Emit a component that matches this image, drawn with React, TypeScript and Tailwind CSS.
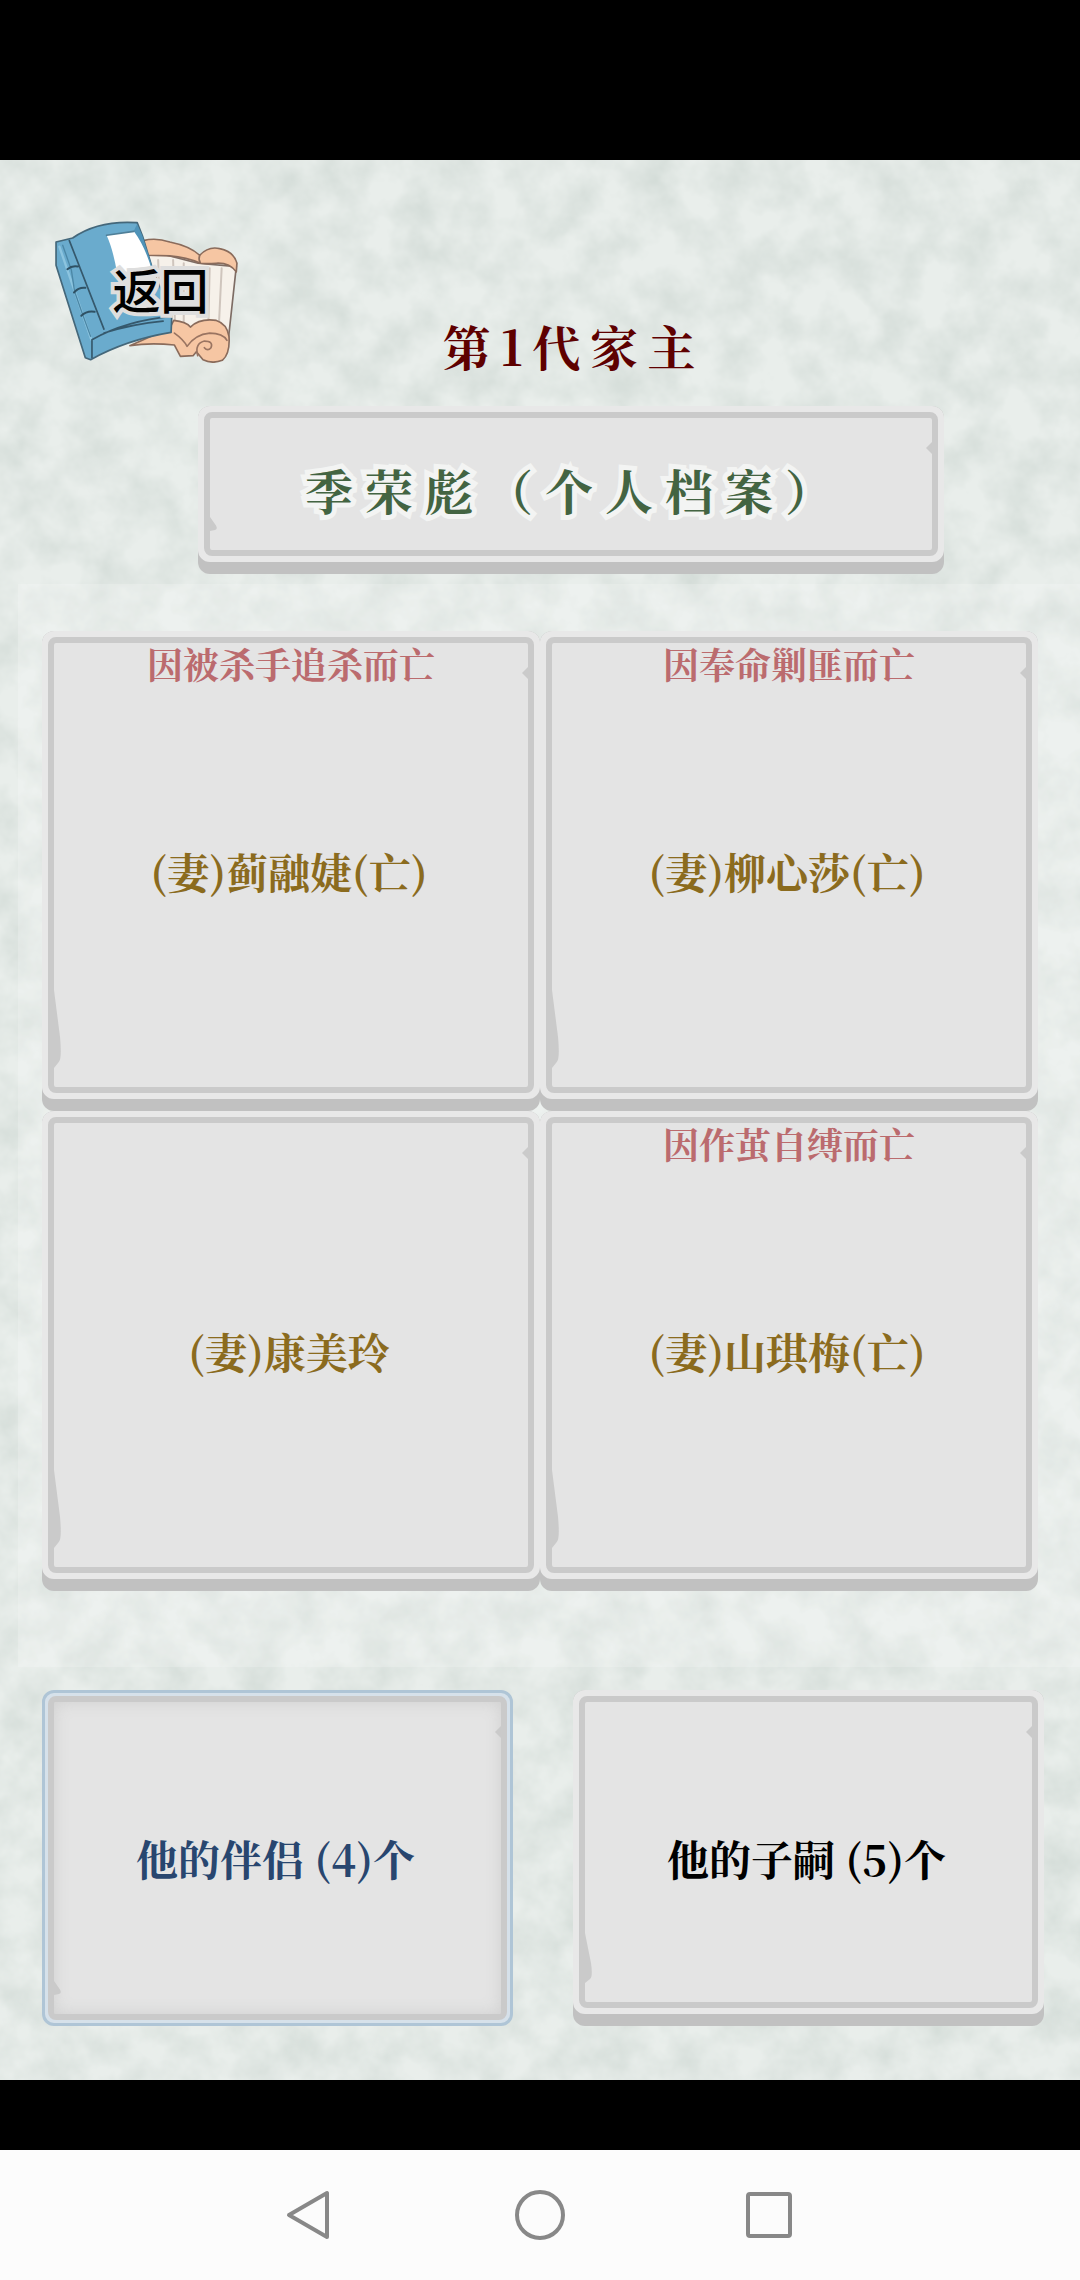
import React, { useState } from 'react';

interface Spouse {
  name: string;
  death?: string;
}

interface PlateProps {
  children: React.ReactNode;
  className?: string;
  wedge?: 'small' | 'medium' | 'large';
  active?: boolean;
  onClick?: () => void;
}

const spouses: Spouse[] = [
  { name: '(妻)蓟融婕(亡)', death: '因被杀手追杀而亡' },
  { name: '(妻)柳心莎(亡)', death: '因奉命剿匪而亡' },
  { name: '(妻)康美玲' },
  { name: '(妻)山琪梅(亡)', death: '因作茧自缚而亡' },
];

const wedgeHeights = {
  small: 'h-[14px]',
  medium: 'h-[50px]',
  large: 'h-[78px]',
};

function Plate({ children, className = '', wedge = 'large', active = false, onClick }: PlateProps) {
  const shell = active
    ? 'border-3 border-[#afc5d6] bg-[#d6e1ea] p-[3px]'
    : 'bg-[#c1c1c1] pb-3';
  const rim = active ? '' : 'border-6 border-[#e8e8e8]';
  const face = active ? 'shadow-[inset_0_0_16px_#cfcfcf]' : '';

  return (
    <button
      type="button"
      onClick={onClick}
      aria-pressed={active}
      className={`flex rounded-xl ${shell} ${className}`}
    >
      <span className={`flex flex-1 self-stretch rounded-xl bg-[#e8e8e8] ${rim}`}>
        <span className={`relative flex flex-1 rounded-lg border-6 border-[#cacaca] bg-[#e4e4e4] ${face}`}>
          <svg
            className="absolute top-6 right-0 h-3 w-[6px]"
            viewBox="0 0 6 12"
            preserveAspectRatio="none"
            aria-hidden="true"
          >
            <path d="M6 0 L0 6 L2 8 L6 12Z" fill="#cacaca" />
          </svg>
          <svg
            className={`absolute bottom-[19px] left-0 w-[7px] ${wedgeHeights[wedge]}`}
            viewBox="0 0 7 50"
            preserveAspectRatio="none"
            aria-hidden="true"
          >
            <path d="M0 0 L6 30 Q8 44 5 46 L0 50Z" fill="#cacaca" />
          </svg>
          {children}
        </span>
      </span>
    </button>
  );
}

function PaperTexture() {
  return (
    <svg className="absolute inset-0 h-full w-full" aria-hidden="true">
      <filter id="paper" x="0" y="0" width="100%" height="100%" colorInterpolationFilters="sRGB">
        <feTurbulence type="fractalNoise" baseFrequency="0.025" numOctaves="4" seed="7" />
        <feColorMatrix
          values="0 0 0 0 0.79
                  0 0 0 0 0.83
                  0 0 0 0 0.81
                  1.1 0 0 0 -0.35"
        />
      </filter>
      <rect width="100%" height="100%" filter="url(#paper)" />
    </svg>
  );
}

function BookIcon() {
  return (
    <svg
      className="absolute inset-0 h-full w-full"
      viewBox="70 60 560 430"
      strokeLinejoin="round"
      strokeLinecap="round"
      aria-hidden="true"
    >
      {/* open scroll */}
      <path d="M350 150 L505 190 L620 200 L596 420 L470 400 L350 400Z" fill="#f6f1ea" stroke="#7d6c64" strokeWidth="5" />
      <path
        d="M385 180 L392 380 M430 180 L436 380 M462 190 L462 390 M540 205 L536 370 M576 205 L568 370"
        stroke="#cfc5bd"
        strokeWidth="6"
      />
      <path
        d="M340 122 Q378 112 420 126 Q480 138 510 166 Q536 138 570 146 Q612 154 622 190 L620 216 Q600 188 560 190 Q530 192 512 190 Q470 172 420 168 L350 166Z"
        fill="#f6c6a3"
        stroke="#8a6b5b"
        strokeWidth="5"
      />
      <path d="M512 190 Q505 178 510 166" stroke="#8a6b5b" strokeWidth="5" fill="none" />
      <path
        d="M300 438 L420 385 L432 362 Q470 366 482 382 Q510 355 560 362 Q592 372 598 410 Q602 462 578 482 Q548 494 520 480 L500 456 L490 468 L452 470 L434 436 Q360 428 300 438Z"
        fill="#f6c6a3"
        stroke="#8a6b5b"
        strokeWidth="5"
      />
      <path
        d="M434 400 Q462 420 472 440 Q496 404 540 400 Q580 400 592 422 M504 468 Q494 432 524 424 Q552 424 544 444 Q534 456 524 444"
        fill="none"
        stroke="#9a7461"
        strokeWidth="5"
      />
      {/* blue book */}
      <path
        d="M78 126 L128 114 Q205 60 322 68 L338 108 L366 200 L426 350 L424 398 Q290 420 182 480 L166 474 L78 196Z"
        fill="#6aabcd"
        stroke="#44677a"
        strokeWidth="5"
      />
      <path d="M322 72 L338 108 L366 196 L356 200 L312 92Z" fill="#4f93b8" />
      <path d="M88 140 L184 420" stroke="#8cc4df" strokeWidth="7" />
      <path d="M118 122 L222 388" stroke="#35586c" strokeWidth="5" />
      <path d="M98 136 L124 210 L134 276 L158 344 L182 410" fill="none" stroke="#4b87a6" strokeWidth="4" />
      <path
        d="M112 208 Q126 196 144 200 M132 278 Q146 262 166 264 M154 348 Q170 332 194 336"
        fill="none"
        stroke="#2f5164"
        strokeWidth="6"
      />
      <path d="M186 474 L186 420 Q290 362 426 350 M222 400 Q310 372 400 364" fill="none" stroke="#35586c" strokeWidth="5" />
      <path d="M230 106 L312 94 Q346 140 366 210 L262 222 Q250 150 230 106Z" fill="#fff" />
      <path d="M230 106 L312 94" stroke="#4f7f98" strokeWidth="5" />
    </svg>
  );
}

export default function App() {
  const [tab, setTab] = useState<'spouse' | 'children'>('spouse');

  return (
    <div className="flex min-h-screen flex-col bg-black pt-[160px] font-['Noto_Serif_CJK_SC','Liberation_Serif','Noto_Sans_CJK_SC',serif] font-bold">
      <main className="relative isolate flex flex-1 flex-col bg-[#e9eeeb] pb-[54px]">
        <div className="absolute inset-0 -z-10">
          <PaperTexture />
        </div>

        <header className="flex items-start pt-[60px] pr-[172px] pl-[53px]">
          <button
            type="button"
            className="relative flex h-[143px] w-[187px] items-center justify-center"
          >
            <BookIcon />
            <span className="relative pb-2 pl-7 font-['Noto_Sans_CJK_SC',sans-serif] text-[48px] leading-[48px] font-medium text-black [-webkit-text-stroke:8px_#dedede] [paint-order:stroke]">
              返回
            </span>
          </button>
          <h1 className="mt-[102px] flex-1 text-center text-[48px] leading-[48px] tracking-[0.2em] text-[#5e0000]">
            第1代家主
          </h1>
        </header>

        <Plate wedge="small" className="mt-9 mr-[136px] ml-[198px] h-[168px]">
          <span className="flex-1 self-center pt-3 pl-2 text-center text-[48px] leading-[72px] tracking-[0.25em] text-[#436442] [-webkit-text-stroke:10px_#f3f4f3] [paint-order:stroke]">
            季荣彪（个人档案）
          </span>
        </Plate>

        <section className="mt-[10px] ml-[18px] grid grid-cols-2 bg-white/20 pt-[47px] pr-[42px] pb-[76px] pl-6">
          {spouses.map((spouse) => (
            <Plate key={spouse.name} className="h-[480px]">
              <span className="grid flex-1 grid-rows-[1fr_auto_1fr] text-center">
                <span className="text-[36px] leading-[42px] text-[#bb6b6e]">{spouse.death}</span>
                <span className="pt-3 pr-1 text-[42px] leading-[60px] text-[#8b6b1e]">{spouse.name}</span>
              </span>
            </Plate>
          ))}
        </section>

        <div className="mt-[23px] mr-9 ml-[42px] grid grid-cols-2 gap-[60px]">
          <Plate
            wedge={tab === 'spouse' ? 'small' : 'medium'}
            active={tab === 'spouse'}
            className="h-[336px]"
            onClick={() => setTab('spouse')}
          >
            <span className="flex-1 self-center pr-1 text-center text-[42px] leading-[60px] text-[#28466f]">
              他的伴侣 (4)个
            </span>
          </Plate>
          <Plate
            wedge={tab === 'children' ? 'small' : 'medium'}
            active={tab === 'children'}
            className="h-[336px]"
            onClick={() => setTab('children')}
          >
            <span className="flex-1 self-center pt-3 pr-1 text-center text-[42px] leading-[60px] text-black">
              他的子嗣 (5)个
            </span>
          </Plate>
        </div>
      </main>

      <nav className="mt-[70px] flex h-[130px] items-center justify-center gap-[180px] bg-[#fcfcfc]">
        <button type="button" aria-label="返回">
          <svg className="h-[50px] w-[50px]" viewBox="0 0 50 50" fill="none" stroke="#888" strokeWidth="4" strokeLinejoin="round">
            <path d="M42 3 V47 L4 25Z" />
          </svg>
        </button>
        <button type="button" aria-label="主页">
          <svg className="h-[50px] w-[50px]" viewBox="0 0 50 50" fill="none" stroke="#888" strokeWidth="4">
            <circle cx="25" cy="25" r="23" />
          </svg>
        </button>
        <button type="button" aria-label="最近任务">
          <svg className="h-[50px] w-[50px]" viewBox="0 0 50 50" fill="none" stroke="#888" strokeWidth="4">
            <rect x="3" y="4" width="42" height="42" rx="2" />
          </svg>
        </button>
      </nav>
    </div>
  );
}
